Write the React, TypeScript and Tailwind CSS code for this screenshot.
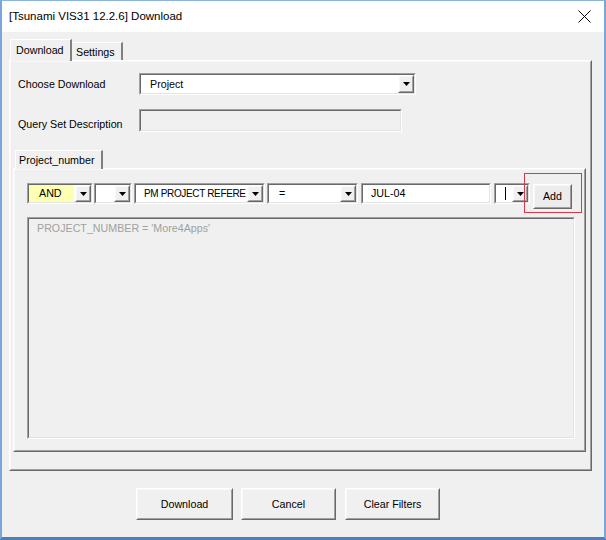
import React from "react";

function Sunken({ className = "", inner = "bg-white", children }: { className?: string; inner?: string; children?: React.ReactNode }) {
  return (
    <div className={`border border-t-[#a0a0a0] border-l-[#a0a0a0] border-r-white border-b-white flex ${className}`}>
      <div className={`flex-1 min-w-0 flex border border-t-[#696969] border-l-[#696969] border-r-[#e3e3e3] border-b-[#e3e3e3] ${inner}`}>
        {children}
      </div>
    </div>
  );
}

function Raised({ className = "", inner = "", children }: { className?: string; inner?: string; children?: React.ReactNode }) {
  return (
    <div className={`border border-t-white border-l-white border-r-[#696969] border-b-[#696969] flex ${className}`}>
      <div className={`flex-1 flex border border-t-[#f8f8f8] border-l-[#f8f8f8] border-r-[#a0a0a0] border-b-[#a0a0a0] ${inner}`}>
        {children}
      </div>
    </div>
  );
}

function Arrow() {
  return (
    <Raised className="w-[16px] shrink-0 bg-[#f0f0f0]" inner="items-center justify-center">
      <svg width="7" height="4" viewBox="0 0 7 4">
        <path d="M0 0h7L3.5 4z" fill="#000" />
      </svg>
    </Raised>
  );
}

function Combo({ className, text, bg = "bg-white", textCls = "pl-[11px]", children }: { className: string; text?: string; bg?: string; textCls?: string; children?: React.ReactNode }) {
  return (
    <Sunken className={`h-[21px] ${className}`} inner="bg-white">
      <div className={`flex-1 min-w-0 flex items-center ${bg} ${textCls}`}>
        {text}
        {children}
      </div>
      <Arrow />
    </Sunken>
  );
}

export default function App() {
  return (
    <div className="w-[606px] h-[540px] flex flex-col border-t border-x-2 border-b-[3px] border-t-[#8bb3e0] border-x-[#7aa6d9] border-b-[#4f7fb8] bg-[#f0f0f0] text-[10.7px] text-black font-['Liberation_Sans',Arial,sans-serif] overflow-hidden">
      {/* Title bar */}
      <div className="h-[31px] shrink-0 bg-white flex items-center justify-between pl-[7px] pr-[13px]">
        <span className="text-[11.5px] leading-none">[Tsunami VIS31 12.2.6] Download</span>
        <svg width="13" height="13" viewBox="0 0 13 13">
          <path d="M0.5 0.5L12.5 12.5M12.5 0.5L0.5 12.5" stroke="#000" strokeWidth="1" />
        </svg>
      </div>

      {/* Body */}
      <div className="flex-1 flex flex-col px-[7px] pt-[7px]">
        {/* Tab headers */}
        <div className="h-[21px] flex items-end pl-[1px]">
          <div className="relative z-10 -mb-px h-[22px] w-[62px] bg-[#f0f0f0] border-t border-l border-t-white border-l-white border-r-2 border-r-[#808080] flex items-start pl-[5px] pt-[2px]">
            Download
          </div>
          <div className="h-[18px] w-[51px] border-t border-t-white border-r-2 border-r-[#808080] flex items-center pl-[4px] pt-[1px]">
            Settings
          </div>
        </div>

        {/* Tab panel */}
        <Raised className="w-[583px] h-[411px]" inner="flex-col pt-[11px] pl-[7px]">
          <div className="flex items-center h-[22px]">
            <div className="w-[121px] pt-[1px]">Choose Download</div>
            <Sunken className="w-[277px] h-[22px]">
              <div className="flex-1 flex items-center pl-[9px]">Project</div>
              <Arrow />
            </Sunken>
          </div>
          <div className="flex items-center h-[23px] mt-[14px]">
            <div className="w-[121px] pt-[7px]">Query Set Description</div>
            <Sunken className="w-[263px] h-[23px]" inner="bg-[#f0f0f0]" />
          </div>

          {/* Inner tab control */}
          <div className="ml-[-5px] mt-[18px] flex flex-col">
            <div className="h-[18px] flex items-end pl-[2px]">
              <div className="relative z-10 -mb-px h-[19px] w-[88px] bg-[#f0f0f0] border-t border-l border-t-white border-l-white border-r-2 border-r-[#808080] flex items-center pl-[3px]">
                Project_number
              </div>
            </div>
            <Raised className="w-[573px] h-[284px]" inner="flex-col pt-[13px] pl-[12px]">
              <div className="flex items-start">
                <Sunken className="w-[66px] h-[21px]">
                  <div className="w-[45px] flex items-center bg-[#ffffb4] pl-[10px]">AND</div>
                  <div className="flex-1" />
                  <Arrow />
                </Sunken>
                <Combo className="w-[38px] ml-[1px]" />
                <Combo className="w-[131px] ml-[2px]" text="PM PROJECT REFERE" textCls="pl-[8px] whitespace-nowrap text-[10px] tracking-[-0.35px]" />
                <Combo className="w-[91px] ml-[2px]" text="=" textCls="pl-[10px]" />
                <Sunken className="w-[130px] h-[21px] ml-[3px]">
                  <div className="flex-1 flex items-center pl-[8px]">JUL-04</div>
                </Sunken>
                <Combo className="w-[36px] ml-[3px]" textCls="pl-[9px]">
                  <div className="w-px h-[13px] bg-black" />
                </Combo>
                <div className="relative ml-[3px] mt-[1px]">
                  <Raised className="w-[39px] h-[25px] bg-[#ececec]" inner="items-center justify-center">
                    Add
                  </Raised>
                  <div className="absolute -left-[9px] -top-[11px] -right-[10px] -bottom-[4px] border border-[#d63b4c]" />
                </div>
              </div>
              <Sunken className="w-[548px] h-[222px] mt-[8px]" inner="bg-[#f0f0f0] items-start pl-[8px] pt-[1px]">
                <span className="text-[#a0a0a0]">PROJECT_NUMBER = 'More4Apps'</span>
              </Sunken>
            </Raised>
          </div>
        </Raised>

        {/* Bottom buttons */}
        <div className="flex mt-[17px] ml-[127px]">
          <Raised className="w-[97px] h-[32px] bg-[#f0f0f0]" inner="items-center justify-center">Download</Raised>
          <Raised className="w-[95px] h-[32px] ml-[8px] bg-[#f0f0f0]" inner="items-center justify-center">Cancel</Raised>
          <Raised className="w-[95px] h-[32px] ml-[9px] bg-[#f0f0f0]" inner="items-center justify-center">Clear Filters</Raised>
        </div>
      </div>
    </div>
  );
}
